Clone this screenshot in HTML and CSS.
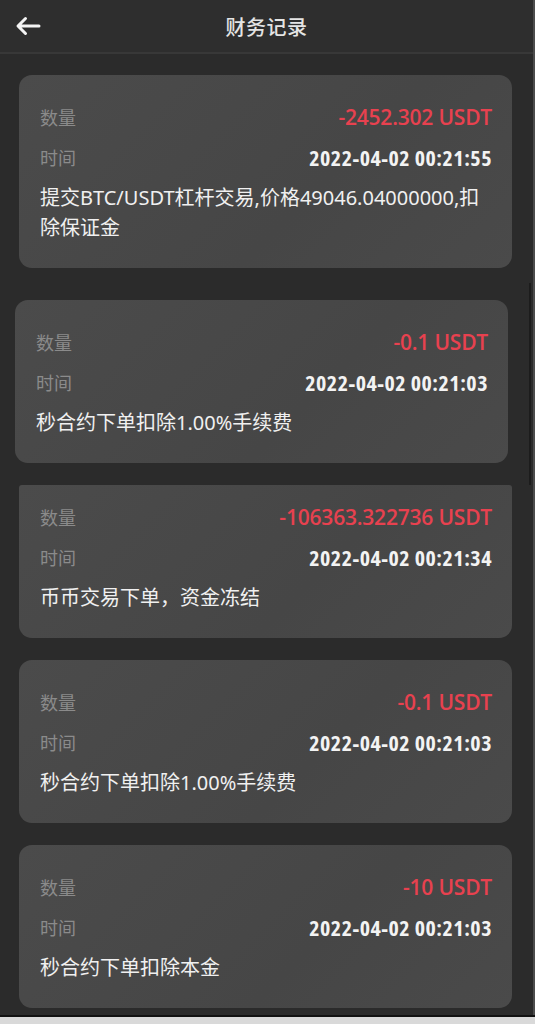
FILE: index.html
```html
<!DOCTYPE html>
<html lang="zh-CN">
<head>
<meta charset="utf-8">
<title>财务记录</title>
<link rel="stylesheet" href="styles.css">
</head>
<body>
<div class="screen">
  <div class="main">
    <header class="header">
      <span class="back">
        <svg width="26" height="20" viewBox="0 0 26 20"><path d="M10.5 2.5 L3 10 L10.5 17.5 M3.5 10 H24" fill="none" stroke="#f4f4f4" stroke-width="3" stroke-linecap="round" stroke-linejoin="round"/></svg>
      </span>
      <h1 class="title">财务记录</h1>
    </header>
    <div class="list">
      <div class="card card-first">
        <div class="row"><span class="label">数量</span><span class="num amount">-2452.302 USDT</span></div>
        <div class="row"><span class="label">时间</span><span class="num time">2022-04-02 00:21:55</span></div>
        <p class="desc">提交BTC/USDT杠杆交易,价格49046.04000000,扣除保证金</p>
      </div>
      <div class="card card-shifted">
        <div class="row"><span class="label">数量</span><span class="num amount">-0.1 USDT</span></div>
        <div class="row"><span class="label">时间</span><span class="num time">2022-04-02 00:21:03</span></div>
        <p class="desc">秒合约下单扣除1.00%手续费</p>
      </div>
      <div class="card card-cut">
        <div class="row"><span class="label">数量</span><span class="num amount">-106363.322736 USDT</span></div>
        <div class="row"><span class="label">时间</span><span class="num time">2022-04-02 00:21:34</span></div>
        <p class="desc">币币交易下单，资金冻结</p>
      </div>
      <div class="card">
        <div class="row"><span class="label">数量</span><span class="num amount">-0.1 USDT</span></div>
        <div class="row"><span class="label">时间</span><span class="num time">2022-04-02 00:21:03</span></div>
        <p class="desc">秒合约下单扣除1.00%手续费</p>
      </div>
      <div class="card">
        <div class="row"><span class="label">数量</span><span class="num amount">-10 USDT</span></div>
        <div class="row"><span class="label">时间</span><span class="num time">2022-04-02 00:21:03</span></div>
        <p class="desc">秒合约下单扣除本金</p>
      </div>
    </div>
    <div class="scrollbar"></div>
  </div>
  <div class="bottom"></div>
</div>
</body>
</html>
```

FILE: styles.css
```css
html, body {
  margin: 0;
  padding: 0;
  background: #2b2b2b;
}

.screen {
  width: 535px;
  height: 1024px;
  overflow: hidden;
  display: flex;
  flex-direction: column;
  font-family: "Noto Sans CJK SC", "Noto Sans", sans-serif;
}

.main {
  position: relative;
  height: 1015px;
  overflow: hidden;
  background: #2b2b2b;
  border-right: 2px solid #4c4c4c;
  box-sizing: border-box;
}

.header {
  height: 52px;
  background: #2e2e2e;
  border-bottom: 2px solid #383838;
  display: flex;
  align-items: center;
  justify-content: center;
  position: relative;
}

.back {
  position: absolute;
  left: 15px;
  top: 16px;
  display: flex;
}

.title {
  margin: 0;
  font-size: 20px;
  font-weight: 500;
  color: #e4e4e4;
  letter-spacing: 0.5px;
}

.list {
  display: flex;
  flex-direction: column;
  gap: 22px;
  padding: 21px 21px 0 19px;
}

.card {
  background: linear-gradient(135deg, #4b4b4b 0%, #464646 60%, #4a4a4a 100%);
  border-radius: 13px;
  padding: 22px 20px 25px 21px;
}

.card-first {
  margin-bottom: 10px;
}

.card-shifted {
  margin-left: -4px;
  margin-right: 4px;
}

.card-cut {
  padding-top: 12px;
  border-radius: 3px 3px 13px 13px;
}

.row {
  height: 40px;
  display: flex;
  align-items: center;
  justify-content: space-between;
}

.label {
  font-size: 18px;
  color: #8b8b8b;
}

.num {
  font-family: "Open Sans", Roboto, sans-serif;
}

.amount {
  color: #e8414f;
  font-size: 21px;
  font-weight: 600;
  letter-spacing: -0.2px;
}

.time {
  color: #f3f3f3;
  font-size: 22px;
  font-stretch: 75%;
  font-weight: 700;
  letter-spacing: 0.5px;
}

.desc {
  margin: 6px 0 0;
  font-family: "Noto Sans", "Noto Sans CJK SC", sans-serif;
  font-size: 20px;
  line-height: 30px;
  color: #f0f0f0;
}

.scrollbar {
  position: absolute;
  right: 2px;
  top: 283px;
  width: 2px;
  height: 202px;
  background: #1c1c1c;
}

.bottom {
  flex: 1;
  background: #d9d9d9;
  border-top: 2px solid #111;
}
```
